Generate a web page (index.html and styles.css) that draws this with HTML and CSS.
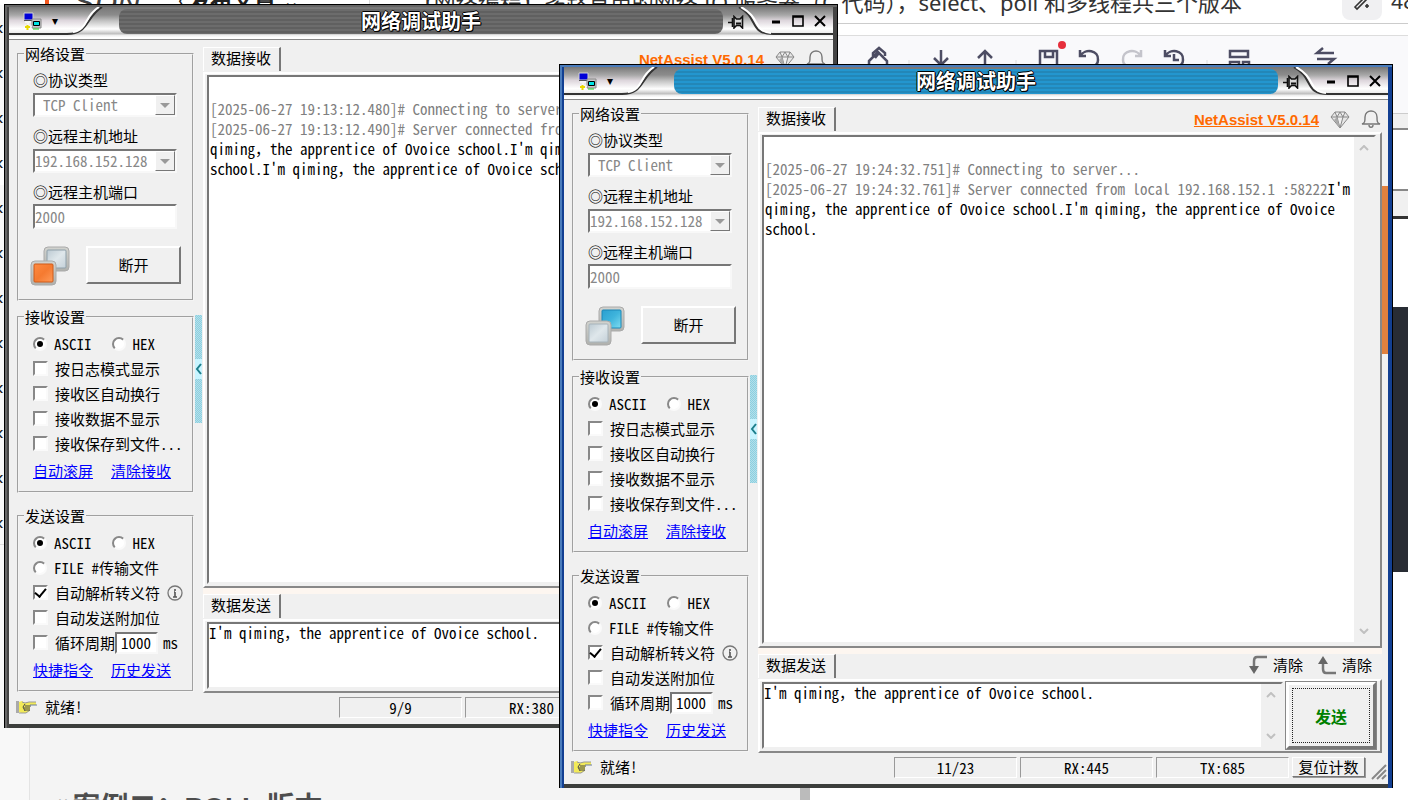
FILE: index.html
```html
<!DOCTYPE html>
<html lang="zh-CN">
<head>
<meta charset="utf-8">
<title>网络调试助手</title>
<link rel="stylesheet" href="styles.css">
</head>
<body>
<svg class="defs" aria-hidden="true">
  <defs>
    <linearGradient id="g-metal" x1="0" y1="0" x2="0" y2="1"><stop offset="0" stop-color="#777"/><stop offset=".3" stop-color="#a8a8a8"/><stop offset=".5" stop-color="#ddd6dc"/><stop offset=".8" stop-color="#fff"/><stop offset="1" stop-color="#e8e8e8"/></linearGradient>
    <linearGradient id="g-blue" x1="0" y1="0" x2="1" y2="1"><stop offset="0" stop-color="#2a9fd0"/><stop offset=".5" stop-color="#3fb4dc"/><stop offset="1" stop-color="#7fdcf0"/></linearGradient>
    <linearGradient id="g-orange" x1="0" y1="0" x2="1" y2="1"><stop offset="0" stop-color="#ff8a40"/><stop offset=".5" stop-color="#f57a30"/><stop offset="1" stop-color="#ff9a58"/></linearGradient>
    <linearGradient id="g-off" x1="0" y1="0" x2="1" y2="1"><stop offset="0" stop-color="#bccad2"/><stop offset=".5" stop-color="#dfe7eb"/><stop offset="1" stop-color="#c4d0d8"/></linearGradient>
    <linearGradient id="g-rim" x1="0" y1="0" x2="0" y2="1"><stop offset="0" stop-color="#d2d3cf"/><stop offset="1" stop-color="#b0b1ad"/></linearGradient>
  </defs>
  <symbol id="i-left" viewBox="0 0 96 28"><path d="M0 0H92C76 10 80 26 61 27H0Z" fill="url(#g-metal)"/><path d="M0 27H58C80 27 76 11 93 0" fill="none" stroke="#333" stroke-width="2"/><path d="M64 25C79 23 75 9 90 0" fill="none" stroke="#fff" stroke-width="2"/></symbol>
  <symbol id="i-right" viewBox="0 0 96 28"><path d="M3 0C22 11 14 26 35 27H96V0Z" fill="url(#g-metal)"/><path d="M2 0C22 11 12 27 36 27H96" fill="none" stroke="#333" stroke-width="2"/><path d="M4 0C24 11 16 24 34 26" fill="none" stroke="#fff" stroke-width="2"/></symbol>
  <symbol id="i-app" viewBox="0 0 19 18"><path d="M1 1h9v7h-9z" fill="#0000d8" stroke="#d0d0d0"/><path d="M1 8.500h9" stroke="#555"/><path d="M9 7h9v9h-9z" fill="#c8c8c8" stroke="#888"/><path d="M10.500 9.500h6v4h-6z" fill="#00e5e5" stroke="#000"/><path d="M2 10h6M5 10v5M5 14.500h4" stroke="#f4f4f4" stroke-width="2"/><path d="M2 15h5M4.500 13v5" stroke="#e8d800" stroke-width="2"/><path d="M10 17h6" stroke="#20d020"/></symbol>
  <symbol id="i-pin" viewBox="0 0 16 14"><path d="M0 7.500H4M4.500 3V12" stroke="#111" stroke-width="1.600"/><path d="M6 1.500V13L8.500 10.500H12L14.500 13V1.500L12 4H8.500Z" fill="#d8d8d8" stroke="#111" stroke-width="1.600"/><path d="M8 8.500h5" stroke="#111" stroke-width="2"/></symbol>
  <symbol id="i-gem" viewBox="0 0 20 18"><path d="M5 1H15L19 6L10 17L1 6Z M1 6H19M5 1L7 6L10 17L13 6L15 1M7 6L10 1L13 6" fill="#e6e6e6" stroke="#888"/><path d="M7 6L10 17L4 9Z" fill="#aaa"/></symbol>
  <symbol id="i-bell" viewBox="0 0 20 19"><path d="M1 14C4 13 4 11 4 7C4 3 7 1 10 1S16 3 16 7C16 11 16 13 19 14ZM8 15C8 18 12 18 12 15" fill="none" stroke="#777" stroke-width="1.4"/></symbol>
  <symbol id="i-hand" viewBox="0 0 22 18"><path d="M0 3h3v12h-3z" fill="#aaa"/><path d="M3 14V4L6 3L9 5L12 4H20V7H14V13L10 15H5Z" fill="#f2ea58"/><path d="M6 4L9 5L13 4H20M3 15H10L14 12" fill="none" stroke="#999"/><path d="M9 8h6M8 10h6M9 12h5M9 6L7 9L9 13" fill="none" stroke="#444"/><path d="M14 7h7" stroke="#6b7d9a"/></symbol>
  <symbol id="i-info" viewBox="0 0 16 16"><circle cx="8" cy="8" r="7" fill="none" stroke="#777" stroke-width="1.3"/><path d="M8 4v2M8 7v5M7 7h1M6 12h4" fill="none" stroke="#555" stroke-width="1.6"/></symbol>
  <symbol id="i-down" viewBox="0 0 20 20"><path d="M19 2H9Q6 2 6 6V12" fill="none" stroke="#777" stroke-width="2.500"/><path d="M1 11H11L6 19Z" fill="#666"/></symbol>
  <symbol id="i-up" viewBox="0 0 20 20"><path d="M19 18H9Q6 18 6 14V8" fill="none" stroke="#777" stroke-width="2.500"/><path d="M1 9H11L6 1Z" fill="#666"/></symbol>
  <symbol id="i-grip" viewBox="0 0 16 16"><path d="M1 15L15 1M6 15L15 6M11 15L15 11" stroke="#888" stroke-width="2"/></symbol>
  <symbol id="i-cup" viewBox="0 0 10 6"><path d="M1 5L5 1L9 5" fill="none" stroke="#c0c0c0" stroke-width="2"/></symbol>
  <symbol id="i-cdown" viewBox="0 0 10 6"><path d="M1 1L5 5L9 1" fill="none" stroke="#c0c0c0" stroke-width="2"/></symbol>
</svg>

<header class="site">
  <span class="logo"><i class="logo-bar"></i>SDN</span>
  <span class="back"><b>〈</b>发布文章 ⌄</span>
  <span class="post-title">【网络编程】多路复用的网络 IO 服务器（C 代码），select、poll 和多线程共三个版本</span>
  <button class="wand" aria-label="AI"><svg width="20" height="20" viewBox="0 0 20 20"><path d="M3 16L14 5l2 2L5 18zM15 13v4M13 15h4M5 5l2 2" fill="none" stroke="#333" stroke-width="1.600"/></svg></button>
  <span class="count">48</span>
</header>
<div class="toolbar">
  <svg width="540" height="40" viewBox="0 0 540 40" fill="none" stroke="#4d4d63" stroke-width="2.500">
    <path d="M11 25l9-9l9 9v9H11zM15 20v-3l6-5l6 5v3M17 22l4-5"/>
    <path d="M83 14v14M76 22l7 7l7-7"/>
    <path d="M127 30v-14M120 22l7-7l7 7"/>
    <path d="M182 30V15h17v15M187 15v6h8v-6"/>
    <path d="M222 14v6h6M222 20C227 12 241 14 240 24c0 4-3 6-6 7"/>
    <path d="M283 14v6h-6M283 20C278 12 264 14 265 24c0 4 3 6 6 7" stroke="#c4c4cb"/>
    <path d="M307 14v6h6M307 20C312 12 326 14 325 24c0 4-3 6-6 7M316 18v6h5"/>
    <path d="M372 15h18v6h-18zM372 26h9v6h-9zM385 26h6v6h-6z"/>
    <path d="M476 17h-17l6-5M459 23h17l-6 5"/>
    <path d="M51 24v16M158 24v16M349 24v16" stroke="#ddd" stroke-width="1"/>
    <circle cx="204" cy="9" r="4" fill="#e62f3c" stroke="none"/>
  </svg>
</div>
<main class="page">
  <nav class="rail"><i>‹</i><i>‹</i><i>‹</i><i class="on">‹</i><i>‹</i><i>‹</i><i>‹</i><i>‹</i><i>‹</i><i>‹</i><i>‹</i><i>‹</i></nav>
  <article class="editor"><h2><small>#</small>案例二：POLL 版本</h2></article>
  <div class="thumb"></div>
  <aside class="preview"><div class="band b1"></div><div class="band b2"></div><div class="band b3"></div><div class="band b4"></div><div class="code"></div></aside>
</main>

<section class="win win-back">
  <div class="titlebar">
    <div class="tb-left"><svg class="edge"><use href="#i-left"/></svg><svg class="app"><use href="#i-app"/></svg><span class="caret">▾</span></div>
    <h1>网络调试助手</h1>
    <svg class="pin"><use href="#i-pin"/></svg>
    <div class="tb-right"><svg class="edge"><use href="#i-right"/></svg>
      <div class="sys"><button aria-label="最小化"><svg viewBox="0 0 12 12"><path d="M2 7h8" stroke="#000" stroke-width="3"/></svg></button><button aria-label="最大化"><svg viewBox="0 0 12 12"><path d="M1 1h10v10h-10zM1 2h10" fill="none" stroke="#000" stroke-width="1.6"/></svg></button><button aria-label="关闭"><svg viewBox="0 0 12 12"><path d="M1 1L11 11M11 1L1 11" stroke="#000" stroke-width="2"/></svg></button></div>
    </div>
  </div>
  <div class="body">
    <div class="side">
      <fieldset class="net"><legend>网络设置</legend>
        <label class="field">◎协议类型<span class="combo"><select class="indent" disabled><option>TCP Client</option></select><b></b></span></label>
        <label class="field">◎远程主机地址<span class="combo"><select disabled><option>192.168.152.128</option></select><b></b></span></label>
        <label class="field">◎远程主机端口<input class="port" type="text" value="2000" disabled></label>
        <div class="conn"><svg class="state" viewBox="0 0 40 40"><rect x="14" y="1" width="25" height="24" rx="4" fill="url(#g-rim)" stroke="#aaa"/><rect x="17" y="4" width="19" height="18" rx="1" fill="url(#g-off)" stroke="#8fa0aa"/><rect x="1" y="15" width="25" height="24" rx="4" fill="url(#g-rim)" stroke="#aaa"/><rect x="4" y="18" width="19" height="18" rx="1" fill="url(#g-orange)" stroke="#d05a18"/></svg><button class="raised">断开</button></div>
      </fieldset>
      <fieldset class="recv"><legend>接收设置</legend>
        <div class="row"><label><input type="radio" name="r1" checked>ASCII</label><label class="second"><input type="radio" name="r1">HEX</label></div>
        <div class="row"><label><input type="checkbox">按日志模式显示</label></div>
        <div class="row"><label><input type="checkbox">接收区自动换行</label></div>
        <div class="row"><label><input type="checkbox">接收数据不显示</label></div>
        <div class="row"><label><input type="checkbox">接收保存到文件...</label></div>
        <div class="links"><a href="#">自动滚屏</a><a href="#">清除接收</a></div>
      </fieldset>
      <fieldset class="send"><legend>发送设置</legend>
        <div class="row"><label><input type="radio" name="s1" checked>ASCII</label><label class="second"><input type="radio" name="s1">HEX</label></div>
        <div class="row"><label><input type="radio" name="s1">FILE #传输文件</label></div>
        <div class="row"><label><input type="checkbox" checked>自动解析转义符</label><svg class="info"><use href="#i-info"/></svg></div>
        <div class="row"><label><input type="checkbox">自动发送附加位</label></div>
        <div class="row"><label><input type="checkbox">循环周期</label><input class="period" type="text" value="1000" aria-label="周期"><span>ms</span></div>
        <div class="links"><a href="#">快捷指令</a><a href="#">历史发送</a></div>
      </fieldset>
    </div>
    <button class="fold" aria-label="折叠"><svg viewBox="0 0 7 20"><path d="M6 5L2 10L6 15" fill="none" stroke="#1d7f8c" stroke-width="2"/></svg></button>
    <div class="work">
      <div class="tabs"><span class="tab">数据接收</span><div class="brand"><a href="#">NetAssist V5.0.14</a><svg class="gem"><use href="#i-gem"/></svg><svg class="bell"><use href="#i-bell"/></svg></div></div>
      <div class="panel panel-log"><div class="well log"><div class="text"><p>&nbsp;</p><p class="dim">[2025-06-27 19:13:12.480]# Connecting to server...</p><p><span class="dim">[2025-06-27 19:13:12.490]# Server connected from local 192.168.152.1 :58013</span>I'm</p><p>qiming，the apprentice of Ovoice school.I'm qiming，the apprentice of Ovoice</p><p>school.I'm qiming，the apprentice of Ovoice school.</p></div><div class="scroll"><svg><use href="#i-cup"/></svg><svg><use href="#i-cdown"/></svg></div></div></div>
      <div class="split"></div>
      <div class="tabs tabs-send"><span class="tab">数据发送</span><div class="clears"><button><svg><use href="#i-down"/></svg>清除</button><button><svg><use href="#i-up"/></svg>清除</button></div></div>
      <div class="panel panel-send"><div class="well"><textarea class="text" aria-label="数据发送">I'm qiming，the apprentice of Ovoice school.</textarea><div class="scroll"><svg><use href="#i-cup"/></svg><svg><use href="#i-cdown"/></svg></div></div><button class="go"><span>发送</span></button></div>
    </div>
  </div>
  <footer class="status"><svg class="hand"><use href="#i-hand"/></svg><span class="ready">就绪!</span><span class="cell c1">9/9</span><span class="cell c2">RX:380</span><span class="cell c3">TX:405</span><button class="reset">复位计数</button><svg class="grip"><use href="#i-grip"/></svg></footer>
</section>

<section class="win win-front">
  <div class="titlebar">
    <div class="tb-left"><svg class="edge"><use href="#i-left"/></svg><svg class="app"><use href="#i-app"/></svg><span class="caret">▾</span></div>
    <h1>网络调试助手</h1>
    <svg class="pin"><use href="#i-pin"/></svg>
    <div class="tb-right"><svg class="edge"><use href="#i-right"/></svg>
      <div class="sys"><button aria-label="最小化"><svg viewBox="0 0 12 12"><path d="M2 7h8" stroke="#000" stroke-width="3"/></svg></button><button aria-label="最大化"><svg viewBox="0 0 12 12"><path d="M1 1h10v10h-10zM1 2h10" fill="none" stroke="#000" stroke-width="1.6"/></svg></button><button aria-label="关闭"><svg viewBox="0 0 12 12"><path d="M1 1L11 11M11 1L1 11" stroke="#000" stroke-width="2"/></svg></button></div>
    </div>
  </div>
  <div class="body">
    <div class="side">
      <fieldset class="net"><legend>网络设置</legend>
        <label class="field">◎协议类型<span class="combo"><select class="indent" disabled><option>TCP Client</option></select><b></b></span></label>
        <label class="field">◎远程主机地址<span class="combo"><select disabled><option>192.168.152.128</option></select><b></b></span></label>
        <label class="field">◎远程主机端口<input class="port" type="text" value="2000" disabled></label>
        <div class="conn"><svg class="state" viewBox="0 0 40 40"><rect x="14" y="1" width="25" height="24" rx="4" fill="url(#g-rim)" stroke="#aaa"/><rect x="17" y="4" width="19" height="18" rx="1" fill="url(#g-blue)" stroke="#1d88b8"/><rect x="1" y="15" width="25" height="24" rx="4" fill="url(#g-rim)" stroke="#aaa"/><rect x="4" y="18" width="19" height="18" rx="1" fill="url(#g-off)" stroke="#a8b4bb"/></svg><button class="raised">断开</button></div>
      </fieldset>
      <fieldset class="recv"><legend>接收设置</legend>
        <div class="row"><label><input type="radio" name="r2" checked>ASCII</label><label class="second"><input type="radio" name="r2">HEX</label></div>
        <div class="row"><label><input type="checkbox">按日志模式显示</label></div>
        <div class="row"><label><input type="checkbox">接收区自动换行</label></div>
        <div class="row"><label><input type="checkbox">接收数据不显示</label></div>
        <div class="row"><label><input type="checkbox">接收保存到文件...</label></div>
        <div class="links"><a href="#">自动滚屏</a><a href="#">清除接收</a></div>
      </fieldset>
      <fieldset class="send"><legend>发送设置</legend>
        <div class="row"><label><input type="radio" name="s2" checked>ASCII</label><label class="second"><input type="radio" name="s2">HEX</label></div>
        <div class="row"><label><input type="radio" name="s2">FILE #传输文件</label></div>
        <div class="row"><label><input type="checkbox" checked>自动解析转义符</label><svg class="info"><use href="#i-info"/></svg></div>
        <div class="row"><label><input type="checkbox">自动发送附加位</label></div>
        <div class="row"><label><input type="checkbox">循环周期</label><input class="period" type="text" value="1000" aria-label="周期"><span>ms</span></div>
        <div class="links"><a href="#">快捷指令</a><a href="#">历史发送</a></div>
      </fieldset>
    </div>
    <button class="fold" aria-label="折叠"><svg viewBox="0 0 7 20"><path d="M6 5L2 10L6 15" fill="none" stroke="#1d7f8c" stroke-width="2"/></svg></button>
    <div class="work">
      <div class="tabs"><span class="tab">数据接收</span><div class="brand"><a href="#">NetAssist V5.0.14</a><svg class="gem"><use href="#i-gem"/></svg><svg class="bell"><use href="#i-bell"/></svg></div></div>
      <div class="panel panel-log"><div class="well log"><div class="text"><p>&nbsp;</p><p class="dim">[2025-06-27 19:24:32.751]# Connecting to server...</p><p><span class="dim">[2025-06-27 19:24:32.761]# Server connected from local 192.168.152.1 :58222</span>I'm</p><p>qiming，the apprentice of Ovoice school.I'm qiming，the apprentice of Ovoice</p><p>school.</p></div><div class="scroll"><svg><use href="#i-cup"/></svg><svg><use href="#i-cdown"/></svg></div></div></div>
      <div class="split"></div>
      <div class="tabs tabs-send"><span class="tab">数据发送</span><div class="clears"><button><svg><use href="#i-down"/></svg>清除</button><button><svg><use href="#i-up"/></svg>清除</button></div></div>
      <div class="panel panel-send"><div class="well"><textarea class="text" aria-label="数据发送">I'm qiming，the apprentice of Ovoice school.</textarea><div class="scroll"><svg><use href="#i-cup"/></svg><svg><use href="#i-cdown"/></svg></div></div><button class="go"><span>发送</span></button></div>
      <i class="marker"></i>
    </div>
  </div>
  <footer class="status"><svg class="hand"><use href="#i-hand"/></svg><span class="ready">就绪!</span><span class="cell c1">11/23</span><span class="cell c2">RX:445</span><span class="cell c3">TX:685</span><button class="reset">复位计数</button><svg class="grip"><use href="#i-grip"/></svg></footer>
</section>
</body>
</html>
```
FILE: styles.css
```css
* { box-sizing: border-box; }
body { margin: 0; height: 100vh; overflow: hidden; position: relative; display: flex; flex-direction: column; background: #fff; font-family: "Liberation Sans", "Noto Sans CJK SC", sans-serif; }
.defs { position: absolute; width: 0; height: 0; }
button { font: inherit; padding: 0; border: 0; background: none; color: inherit; }

/* page behind the windows */
.site { flex: none; height: 24px; display: flex; align-items: flex-start; overflow: hidden; border-bottom: 1px solid #ccc; font-size: 22px; line-height: 26px; color: #333; white-space: nowrap; }
.site > * { margin-top: -11px; }
.logo { display: flex; gap: 24px; width: 166px; padding-left: 45px; font-size: 32px; font-style: italic; color: #444; }
.logo-bar { width: 4px; height: 26px; background: #f4581f; }
.back { width: 204px; font-weight: bold; color: #222; border-right: 1px solid #ddd; font-size: 22px; }
.back b { font-weight: normal; }
.post-title { flex: 1; text-align: right; padding-right: 100px; font-family: "Noto Sans", "Noto Sans CJK SC", sans-serif; }
.site .wand { width: 40px; height: 40px; margin-top: -20px; padding-top: 8px; border-radius: 8px; background: #f0f0f2; }
.count { width: 26px; padding-left: 9px; }
.toolbar { flex: none; height: 79px; margin-top: 11px; padding-left: 858px; border-top: 1px solid #ddd; border-bottom: 1px solid #ccc; background: #f9f9fb; }
.page { flex: 1; display: flex; min-height: 0; }
.rail { flex: none; width: 30px; margin-top: -109px; background: #f8f8f8; border-right: 1px solid #e4e4e4; }
.rail i { display: block; height: 45px; line-height: 45px; font-style: normal; font-size: 20px; color: #222; text-indent: -3px; }
.rail i:last-child { border-bottom: 1px solid #ddd; }
.rail .on { background: #fff; }
.editor { flex: none; width: 770px; display: flex; align-items: flex-end; background: #f4f4f4; }
.editor h2 { display: flex; gap: 4px; margin: 0 0 -26px 24px; font-size: 28px; line-height: 36px; color: #4d4d4d; }
.editor small { font-size: 26px; color: #bbb; font-weight: normal; }
.thumb { flex: none; width: 10px; background: #bbb; }
.preview { flex: 1; background: #fff; }
.b1 { height: 16px; background: #f0f0f0; border-bottom: 2px solid #888; }
.b2 { height: 61px; background: #fff; border-bottom: 2px solid #888; }
.b3 { height: 28px; background: #f0f0f0; border-bottom: 3px solid #333; }
.b4 { height: 88px; }
.code { height: 265px; background: #282c34; }

/* window frame */
.win { --edge: #666; --edge2: #444; position: absolute; width: 834px; display: flex; flex-direction: column; border: 1px solid #000; border-bottom: 0; background: #f0f0f0; box-shadow: inset 2px 2px var(--edge), inset -4px 0 var(--edge2), inset 4px 0 var(--edge2), inset 0 -4px #3c3e3c; padding: 2px 4px 4px; font-family: "Noto Sans Mono CJK SC", "Noto Sans CJK SC", monospace; font-size: 15px; line-height: 18px; color: #000; }
.win-back { left: 4px; top: 4px; --bar: #6c6c6c; --bar2: #606060; }
.win-front { left: 559px; top: 64px; --edge: #4a7cbc; --edge2: #123f92; --bar: #2396cf; --bar2: #2387b8; }
.titlebar { display: flex; height: 33px; background: linear-gradient(#777 0, #8c8c8c 8px, #c4c4c4 14px, #fff 22px, #bbb 27px, #f0f0f0 28px, #f0f0f0 29px, #fff 30px, #fff 32px, #888 32px); }
.tb-left, .tb-right { position: relative; flex: none; height: 28px; display: flex; align-items: center; }
.tb-left { width: 110px; padding-left: 14px; gap: 10px; }
.tb-right { width: 96px; justify-content: flex-end; padding-right: 7px; }
.edge { position: absolute; left: 0; top: 0; width: 96px; height: 28px; }
.app { position: relative; width: 19px; height: 18px; }
.caret { position: relative; font: 12px/18px "DejaVu Sans", sans-serif; }
.titlebar h1 { flex: 1; height: 25px; margin: 2px 0 0; border-radius: 8px; background: repeating-linear-gradient(var(--bar) 0 2px, var(--bar2) 2px 4px); text-align: center; font: bold 20px/24px "Noto Sans CJK SC", sans-serif; color: #fff; text-shadow: 1px 0 #000, -1px 0 #000, 0 1px #000, 0 -1px #000, 1px 1px #000; }
.pin { flex: none; width: 16px; height: 14px; margin: 8px 0 0 5px; }
.titlebar .tb-right { margin-left: -7px; }
.sys { position: relative; display: flex; gap: 10px; }
.sys button { width: 12px; height: 12px; display: flex; }
.sys svg { width: 12px; height: 12px; }

.body { display: flex; padding-top: 5px; }
.side { flex: none; width: 177px; margin-left: 8px; }
fieldset { margin: 0; min-width: 0; border: 2px groove #f4f4f4; padding: 5px 0 8px 14px; }
legend { margin-left: -9px; padding: 0 1px; line-height: 18px; }
.net { padding: 7px 0 13px 14px; margin-bottom: 7px; }
.recv { margin-bottom: 14px; }
.field { display: block; margin-bottom: 10px; line-height: 20px; }
.combo { position: relative; display: block; margin-top: 3px; height: 23px; width: 144px; }
select, input[type=text], textarea { font: inherit; border: 2px solid; border-color: #777 #f8f8f8 #f8f8f8 #777; border-radius: 0; background: #fff; color: #000; margin: 0; padding: 0; outline: 0; }
select { appearance: none; display: block; width: 144px; height: 24px; line-height: 18px; }
select.indent { padding-left: 8px; }
select:disabled, input:disabled { color: #888; opacity: 1; }
.combo b { position: absolute; right: 2px; top: 2px; width: 20px; height: 20px; display: grid; place-items: center; background: #f0f0f0; border: 1px solid; border-color: #fff #777 #777 #fff; }
.combo b::before { content: ""; border: 5px solid transparent; border-top-color: #999; border-bottom: 0; }
.field .port { display: block; width: 144px; height: 25px; margin-top: 2px; }
.conn { display: flex; align-items: flex-start; gap: 16px; padding-top: 7px; margin-left: -3px; }
.state { width: 40px; height: 40px; }
.raised { width: 95px; height: 38px; border: 2px solid; border-color: #fff #777 #777 #fff; }
.row { display: flex; align-items: center; height: 25px; }
.row label { display: flex; align-items: center; gap: 7px; white-space: nowrap; }
.row .second { margin-left: 20px; }
input[type=checkbox], input[type=radio] { appearance: none; flex: none; display: grid; place-items: center; margin: 0; background: #fff; border: 2px solid; border-color: #888 #fafafa #fafafa #888; }
input[type=checkbox] { width: 15px; height: 15px; }
input[type=radio] { width: 14px; height: 14px; border-radius: 50%; }
input[type=radio]:checked::before { content: ""; width: 6px; height: 6px; border-radius: 50%; background: #000; }
input[type=checkbox]:checked::before { content: ""; width: 5px; height: 9px; border: solid #000; border-width: 0 2px 2px 0; transform: rotate(40deg); margin-top: -3px; }
.info { width: 16px; height: 16px; margin-left: 7px; }
.row .period { width: 43px; height: 22px; padding-left: 4px; }
.row span { margin-left: 5px; }
.links { display: flex; gap: 18px; margin-top: 2px; line-height: 25px; }
.links a { color: #00f; }
.fold { flex: none; width: 7px; height: 108px; margin: 270px 1px 0; background: repeating-conic-gradient(#8ccfe0 0 25%, #b4e0ea 0 50%) 0 0/2px 2px; display: flex; align-items: center; }
.fold svg { width: 7px; height: 20px; background: #c8f4ff; }

.work { position: relative; flex: 1; min-width: 0; margin-right: 6px; }
.tabs { display: flex; justify-content: space-between; height: 27px; padding-top: 2px; }
.tab { height: 24px; width: 78px; padding-left: 7px; line-height: 20px; border-left: 1px solid #fff; border-top: 1px solid #fff; border-right: 2px solid #777; }
.brand { display: flex; align-items: center; gap: 11px; padding-right: 1px; }
.brand a { font: bold 15px/20px "Liberation Sans", sans-serif; color: #ff6a00; text-decoration: underline; }
.gem { width: 20px; height: 18px; }
.bell { width: 20px; height: 19px; }
.panel { display: flex; border: 2px solid; border-color: #fff #888 #888 #fff; padding: 1px 4px 2px 2px; gap: 3px; }
.panel-log { height: 516px; }
.well { flex: 1; min-width: 0; display: flex; border: 2px solid; border-color: #777 #f0f0f0 #f0f0f0 #777; background: #fff; }
.text { flex: 1; min-width: 0; padding: 2px 0 0 1px; line-height: 20px; white-space: pre; overflow: hidden; }
.text p { margin: 0; }
.dim { color: #808080; }
.win textarea.text { border: 0; padding: 0; resize: none; white-space: pre-wrap; line-height: 18px; }
.scroll { flex: none; width: 20px; display: flex; flex-direction: column; justify-content: space-between; align-items: center; padding: 8px 0; background: #f0f0f0; }
.scroll svg { width: 10px; height: 6px; }
.split { height: 6px; background: #fdf6f0; }
.tabs-send { height: 25px; padding-top: 0; }
.clears { display: flex; gap: 14px; padding-right: 10px; }
.clears button { display: flex; align-items: center; gap: 5px; height: 22px; }
.clears svg { width: 20px; height: 20px; }
.panel-send { height: 74px; }
.go { width: 90px; padding: 3px; border: 3px solid; border-color: #fff #777 #777 #fff; outline: 1px solid #888; color: #008000; font-size: 16px; font-weight: bold; }
.go span { display: grid; place-items: center; height: 100%; border: 1px dotted #222; }
.marker { position: absolute; right: -6px; top: 81px; width: 6px; height: 168px; background: #e0813f; }

.status { display: flex; align-items: center; height: 31px; padding: 0 1px 3px 7px; gap: 3px; }
.hand { width: 22px; height: 18px; }
.ready { flex: 1; padding-left: 4px; }
.cell { height: 21px; line-height: 19px; text-align: center; border: 1px solid; border-color: #999 #fff #fff #999; }
.c1 { width: 123px; }
.c2, .c3 { width: 133px; }
.reset { width: 73px; height: 20px; line-height: 18px; border: 1px solid; border-color: #fff #777 #777 #fff; box-shadow: 1px 1px #999; }
.grip { width: 16px; height: 16px; margin: 10px 0 0 3px; }
```
